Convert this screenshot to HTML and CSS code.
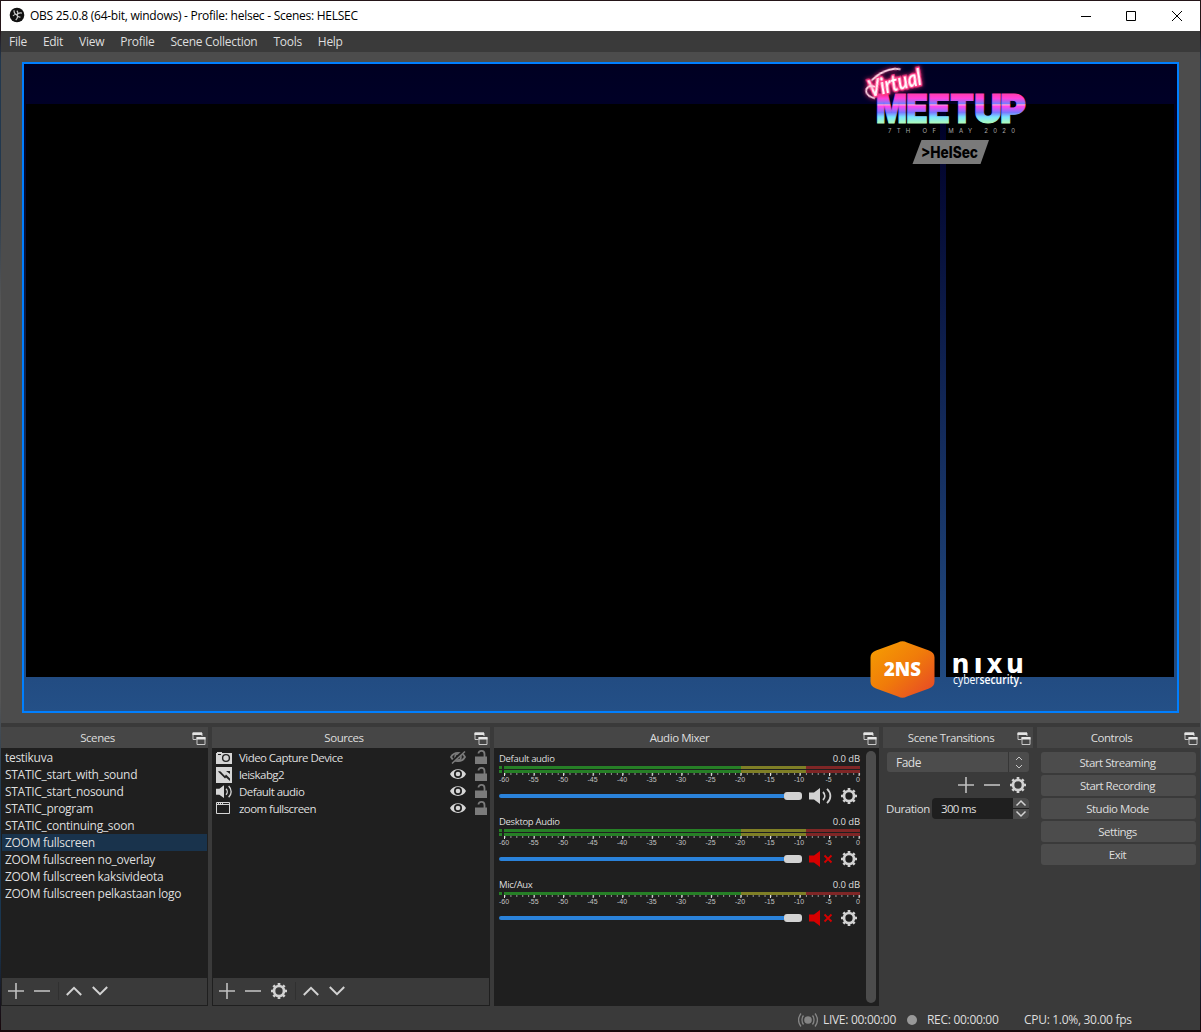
FILE: index.html
```html
<!DOCTYPE html>
<html lang="en">
<head>
<meta charset="utf-8">
<title>OBS 25.0.8</title>
<link rel="stylesheet" href="styles.css">
</head>
<body>
<svg width="0" height="0" class="defs">
  <symbol id="float" viewBox="0 0 14 14"><path d="M1 7.5V1h9v3M1 7.5h3.5" fill="none" stroke="#c8c8c8"/><path d="M.5.5h9.500v2.500H.5z" fill="#e4e4e4"/><path d="M5 5.500h8v7H5z" fill="#464646" stroke="#c8c8c8"/><path d="M4.500 5h9v2.500h-9z" fill="#e8e8e8"/></symbol>
  <symbol id="plus" viewBox="0 0 16 16"><path d="M0 8h16M8 0v16" stroke="#c0c0c0" stroke-width="1.600"/></symbol>
  <symbol id="minus" viewBox="0 0 16 16"><path d="M0 8h16" stroke="#c0c0c0" stroke-width="1.600"/></symbol>
  <symbol id="up" viewBox="0 0 16 16"><path d="M.8 12L8 4.800 15.200 12" fill="none" stroke="#d2d2d2" stroke-width="2"/></symbol>
  <symbol id="down" viewBox="0 0 16 16"><path d="M.8 4L8 11.200 15.200 4" fill="none" stroke="#d2d2d2" stroke-width="2"/></symbol>
  <symbol id="gear" viewBox="0 0 16 16"><circle cx="8" cy="8" r="5" fill="none" stroke="#d2d2d2" stroke-width="2.700"/><g stroke="#d2d2d2" stroke-width="2.700"><path d="M8 0v2.500M8 13.500V16M0 8h2.500M13.500 8H16M2.400 2.400l1.700 1.700M11.900 11.900l1.700 1.700M2.400 13.600l1.700-1.700M11.900 4.100l1.700-1.700"/></g></symbol>
  <symbol id="eye" viewBox="0 0 16 12"><path d="M0 6C3-.5 13-.5 16 6 13 12.500 3 12.500 0 6z" fill="#d6d6d6"/><circle cx="8" cy="6" r="4" fill="#1f1f1f"/><circle cx="8" cy="6" r="2.300" fill="#d6d6d6"/></symbol>
  <symbol id="eye-off" viewBox="0 0 16 14"><path d="M1 7c3-5.500 11-5.500 14 0-3 5.500-11 5.500-14 0z" fill="none" stroke="#7c7c7c" stroke-width="1.800"/><circle cx="8" cy="7" r="3" fill="none" stroke="#7c7c7c" stroke-width="1.500"/><path d="M1 13L14 1" stroke="#1f1f1f" stroke-width="3"/><path d="M2 13.500L15 1.500" stroke="#7c7c7c" stroke-width="1.500"/></symbol>
  <symbol id="lock" viewBox="0 0 12 14"><path d="M0 6.500h12V14H0z" fill="#7b7b7b"/><path d="M3.500 3.500C3.500 0 9.500 0 9.500 4v3" fill="none" stroke="#7b7b7b" stroke-width="1.800"/></symbol>
  <symbol id="sound" viewBox="0 0 24 16"><path d="M0 4.500h5L11 0v16l-6-4.500H0z" fill="#d2d2d2"/><path d="M14 4c2.300 2.300 2.300 5.700 0 8M18 .8c4.500 4.200 4.500 10.200 0 14.400" fill="none" stroke="#d2d2d2" stroke-width="1.800"/></symbol>
  <symbol id="muted" viewBox="0 0 24 16"><path d="M0 4.500h5L11 0v16l-6-4.500H0z" fill="#d60000"/><path d="M15.500 4.500l7 7M22.500 4.500l-7 7" stroke="#d60000" stroke-width="1.800"/></symbol>
  <symbol id="ticks" viewBox="0 0 358 4"><path d="M.500 1h356" stroke="#969696" stroke-width="2" stroke-dasharray="1 4.910"/><path d="M0 1.500h357" stroke="#e4e4e4" stroke-width="3" stroke-dasharray="1 28.550"/></symbol>
</svg>

<div class="window">
  <header class="titlebar">
    <svg class="logo" viewBox="0 0 16 16"><circle cx="8" cy="8" r="7.300" fill="#111"/><g fill="none" stroke="#c8c8c8" stroke-width="1.200"><path d="M5 3.200c0 2.600.8 4 3 4.600M12.900 6.200c-2.400-.6-4 .1-4.900 1.600M6.700 13c2-1.700 2.400-3.200 1.300-5.200"/><path d="M8 7.800c-1.500-.6-3-.2-4 1.200M8 7.800c1.200-1.300 1-3-.2-4M8 7.800c.4 1.600 1.600 2.500 3.500 2.200"/></g></svg>
    <span class="caption">OBS 25.0.8 (64-bit, windows) - Profile: helsec - Scenes: HELSEC</span>
    <svg class="winbtns" viewBox="0 0 110 14"><path d="M1 7.500h10M46.500 2.500h9v9h-9zM92 2l10 10M102 2L92 12" fill="none" stroke="#000"/></svg>
  </header>
  <nav class="menu"><span>File</span><span>Edit</span><span>View</span><span>Profile</span><span>Scene Collection</span><span>Tools</span><span>Help</span></nav>

  <main class="stage">
    <div class="canvas">
      <div class="video wide"></div>
      <div class="video side"></div>
      <svg class="overlay" viewBox="24 64 1153 647">
        <defs>
          <linearGradient id="neon" x1="0" y1="92" x2="0" y2="124" gradientUnits="userSpaceOnUse"><stop offset="0" stop-color="#ff3c9c"/><stop offset=".2" stop-color="#ff40dc"/><stop offset=".36" stop-color="#7a7cff"/><stop offset=".4" stop-color="#ff9cd8"/><stop offset=".45" stop-color="#ff44f0"/><stop offset=".64" stop-color="#7a78ff"/><stop offset=".78" stop-color="#78e4ff"/><stop offset="1" stop-color="#b4ffb0"/></linearGradient>
          <linearGradient id="orange" x1="0" y1="0" x2="1" y2="1"><stop offset="0" stop-color="#f6a000"/><stop offset=".5" stop-color="#f07b0a"/><stop offset="1" stop-color="#e6432a"/></linearGradient>
        </defs>
        <text class="meetup" y="123"><tspan x="876" textLength="31" lengthAdjust="spacingAndGlyphs">M</tspan><tspan x="906" textLength="22" lengthAdjust="spacingAndGlyphs">E</tspan><tspan x="928" textLength="22" lengthAdjust="spacingAndGlyphs">E</tspan><tspan x="950" textLength="24" lengthAdjust="spacingAndGlyphs">T</tspan><tspan x="974" textLength="28" lengthAdjust="spacingAndGlyphs">U</tspan><tspan x="1000" textLength="26" lengthAdjust="spacingAndGlyphs">P</tspan></text>
        <g transform="rotate(-14 895 84)"><text class="virtual" x="868" y="91" textLength="54" lengthAdjust="spacingAndGlyphs">Virtual</text><path class="swash" d="M872 93q-9-5-6-11 4-4 9 0M873 75q17-10 31-4"/></g>
        <text class="date" x="888" y="133" textLength="130">7TH OF MAY 2020</text>
        <path d="M921.500 140H989l-8.500 24h-68z" fill="#7a7a7a"/>
        <text class="helsec" x="921" y="158" textLength="57" lengthAdjust="spacingAndGlyphs">&gt;HelSec</text>
        <path d="M898 642.500q4.500-2.500 9 0l22 8q5.500 2 5.500 7v24q0 5-5.500 7l-22 8q-4.500 2.500-9 0l-22-8q-5.500-2-5.500-7v-24q0-5 5.500-7z" fill="url(#orange)"/>
        <text class="twons" x="884" y="676" textLength="37" lengthAdjust="spacingAndGlyphs">2NS</text>
        <g class="nixu"><text x="951.500" y="672.500" textLength="18" lengthAdjust="spacingAndGlyphs">n</text><text x="973.500" y="672.500">ı</text><text x="986.500" y="672.500" textLength="16" lengthAdjust="spacingAndGlyphs">x</text><text x="1006" y="672.500" textLength="18" lengthAdjust="spacingAndGlyphs">u</text></g>
        <text class="cyber" x="953" y="684" textLength="69" lengthAdjust="spacingAndGlyphs">cyber<tspan>security.</tspan></text>
      </svg>
    </div>
  </main>

  <section class="docks">
    <div class="dock">
      <h2>Scenes<svg><use href="#float"/></svg></h2>
      <div class="list">
        <ul class="scenes"><li>testikuva</li><li>STATIC_start_with_sound</li><li>STATIC_start_nosound</li><li>STATIC_program</li><li>STATIC_continuing_soon</li><li class="sel">ZOOM fullscreen</li><li>ZOOM fullscreen no_overlay</li><li>ZOOM fullscreen kaksivideota</li><li>ZOOM fullscreen pelkastaan logo</li></ul>
        <div class="tools"><svg><use href="#plus"/></svg><svg><use href="#minus"/></svg><i></i><svg><use href="#up"/></svg><svg><use href="#down"/></svg></div>
      </div>
    </div>

    <div class="dock">
      <h2>Sources<svg><use href="#float"/></svg></h2>
      <div class="list">
        <ul class="sources">
          <li><svg class="kind" viewBox="0 0 16 16"><path d="M0 3h1V2h5v1h10v11H0z" fill="#d6d6d6"/><circle cx="10" cy="8" r="3.400" fill="none" stroke="#222" stroke-width="1.400"/><path d="M2 4.500h3" stroke="#222"/></svg><span>Video Capture Device</span><svg class="vis off"><use href="#eye-off"/></svg><svg class="lock"><use href="#lock"/></svg></li>
          <li><svg class="kind" viewBox="0 0 16 16"><path d="M0 0h16v16H0z" fill="#d6d6d6"/><path d="M2 4.500c2-.5 3 0 4 1.500l3 3 1-1.500 4 4v2.500L10 10.500 9 11.500zM10 4h4v3z" fill="#222"/></svg><span>leiskabg2</span><svg class="vis"><use href="#eye"/></svg><svg class="lock"><use href="#lock"/></svg></li>
          <li><svg class="kind" viewBox="0 0 24 24"><path d="M0 7h5l7-5v19l-7-5H0z" fill="#d6d6d6"/><path d="M15 7c2.500 2.500 2.500 6.500 0 9M19 3c5 5 5 12 0 17" fill="none" stroke="#d6d6d6" stroke-width="2"/></svg><span>Default audio</span><svg class="vis"><use href="#eye"/></svg><svg class="lock"><use href="#lock"/></svg></li>
          <li><svg class="kind" viewBox="0 0 16 16"><path d="M.5 1.500h13v11H.5zM0 3.500h14" fill="none" stroke="#d6d6d6"/><path d="M2 2.500h6" stroke="#d6d6d6" stroke-dasharray="1 1"/></svg><span>zoom fullscreen</span><svg class="vis"><use href="#eye"/></svg><svg class="lock"><use href="#lock"/></svg></li>
        </ul>
        <div class="tools"><svg><use href="#plus"/></svg><svg><use href="#minus"/></svg><svg><use href="#gear"/></svg><i></i><svg><use href="#up"/></svg><svg><use href="#down"/></svg></div>
      </div>
    </div>

    <div class="dock">
      <h2>Audio Mixer<svg><use href="#float"/></svg></h2>
      <div class="mixer">
        <div class="channels">
          <div class="channel">
            <div class="names"><span>Default audio</span><span>0.0 dB</span></div>
            <div class="meter"></div><div class="meter"></div>
            <svg class="ticks"><use href="#ticks"/></svg>
            <div class="scale"><b>-60</b><b>-55</b><b>-50</b><b>-45</b><b>-40</b><b>-35</b><b>-30</b><b>-25</b><b>-20</b><b>-15</b><b>-10</b><b>-5</b><b>0</b></div>
            <div class="fader"><div class="track"></div><div class="knob"></div><svg class="spk"><use href="#sound"/></svg><svg class="cog"><use href="#gear"/></svg></div>
          </div>
          <div class="channel">
            <div class="names"><span>Desktop Audio</span><span>0.0 dB</span></div>
            <div class="meter"></div><div class="meter"></div>
            <svg class="ticks"><use href="#ticks"/></svg>
            <div class="scale"><b>-60</b><b>-55</b><b>-50</b><b>-45</b><b>-40</b><b>-35</b><b>-30</b><b>-25</b><b>-20</b><b>-15</b><b>-10</b><b>-5</b><b>0</b></div>
            <div class="fader"><div class="track"></div><div class="knob"></div><svg class="spk"><use href="#muted"/></svg><svg class="cog"><use href="#gear"/></svg></div>
          </div>
          <div class="channel">
            <div class="names"><span>Mic/Aux</span><span>0.0 dB</span></div>
            <div class="meter"></div>
            <svg class="ticks"><use href="#ticks"/></svg>
            <div class="scale"><b>-60</b><b>-55</b><b>-50</b><b>-45</b><b>-40</b><b>-35</b><b>-30</b><b>-25</b><b>-20</b><b>-15</b><b>-10</b><b>-5</b><b>0</b></div>
            <div class="fader"><div class="track"></div><div class="knob"></div><svg class="spk"><use href="#muted"/></svg><svg class="cog"><use href="#gear"/></svg></div>
          </div>
        </div>
        <div class="scrollbar"></div>
      </div>
    </div>

    <div class="dock">
      <h2>Scene Transitions<svg><use href="#float"/></svg></h2>
      <div class="transitions">
        <div class="combo"><span>Fade</span><svg viewBox="0 0 20 20"><path d="M7 8l3-3 3 3M7 13l3 3 3-3" fill="none" stroke="#c8c8c8"/></svg></div>
        <div class="tbtns"><svg><use href="#plus"/></svg><svg><use href="#minus"/></svg><svg><use href="#gear"/></svg></div>
        <div class="duration"><label>Duration</label><div class="spin"><span>300 ms</span><div class="arrows"><svg viewBox="0 0 16 10"><path d="M3.500 7.500L8 3l4.500 4.500" fill="none" stroke="#d2d2d2" stroke-width="1.500"/></svg><svg viewBox="0 0 16 10"><path d="M3.500 2.500L8 7l4.500-4.500" fill="none" stroke="#d2d2d2" stroke-width="1.500"/></svg></div></div></div>
      </div>
    </div>

    <div class="dock">
      <h2>Controls<svg><use href="#float"/></svg></h2>
      <div class="controls"><button>Start Streaming</button><button>Start Recording</button><button>Studio Mode</button><button>Settings</button><button>Exit</button></div>
    </div>
  </section>

  <footer class="status">
    <svg class="live" viewBox="0 0 20 16"><circle cx="10" cy="8" r="3.800" fill="#858585"/><path d="M5.500 3.500c-2 2.500-2 6.500 0 9M14.500 3.500c2 2.500 2 6.500 0 9M3 1.500c-3 4-3 9 0 13M17 1.500c3 4 3 9 0 13" fill="none" stroke="#858585" stroke-width="1.300"/></svg>
    <span class="s-live">LIVE: 00:00:00</span><i class="dot"></i><span class="s-rec">REC: 00:00:00</span><span>CPU: 1.0%, 30.00 fps</span>
  </footer>
</div>
</body>
</html>
```
FILE: styles.css
```css
* { box-sizing: border-box; }
body {
  margin: 0;
  width: 1201px;
  height: 1032px;
  padding: 1px 1px 2px;
  overflow: hidden;
  background: linear-gradient(#241518 0 30px, #22384e 60px 190px, #555 300px 700px, #193650 800px 940px, #180609);
  font: 12px/17px "Open Sans", "Noto Sans", sans-serif;
  letter-spacing: -0.3px;
  color: #dedede;
}
svg { display: block; flex: none; }
.defs { position: absolute; }
.window { width: 1199px; height: 1029px; background: #3a3a3a; display: flex; flex-direction: column; }
.titlebar { height: 30px; flex: none; background: #fff; color: #000; display: flex; align-items: center; padding: 0 10px 2px 8px; }
.logo { width: 16px; height: 16px; }
.caption { margin-left: 5px; letter-spacing: -0.26px; white-space: nowrap; }
.winbtns { width: 110px; height: 14px; margin: 1px 0 0 auto; }
.menu { height: 21px; flex: none; display: flex; align-items: center; gap: 16px; padding: 0 0 0 8px; background: #3a3a3a; letter-spacing: -0.28px; }
.stage { height: 671px; flex: none; background: #4c4c4c; padding: 10px 21px; }
.canvas {
  position: relative; width: 1157px; height: 651px; border: 2px solid #007fff;
  background: linear-gradient(#000022, #000028 8%, #245087 100%);
  display: flex; gap: 6px; padding: 40px 2px 34px;
}
.video { background: #000; height: 573px; }
.wide { width: 914px; }
.side { width: 228px; }
.overlay { position: absolute; left: 0; top: 0; width: 1153px; height: 647px; letter-spacing: 0; }
.meetup { font: 900 40px "Inter", sans-serif; fill: url(#neon); stroke: url(#neon); stroke-width: 1px; }
.virtual { font: italic 700 23px "Lato", sans-serif; fill: #fff; stroke: #ff3c86; stroke-width: 3px; paint-order: stroke; filter: drop-shadow(0 0 2px #e9246c); }
.swash { fill: none; stroke: #ffd5e5; stroke-width: 1.8px; filter: drop-shadow(0 0 2px #ff2070); }
.date { font: 6px "Inter", sans-serif; fill: #a8a8a8; letter-spacing: 3px; }
.helsec { font: 800 16px "Inter", sans-serif; fill: #000; }
.twons { font: 800 20px "Open Sans", sans-serif; fill: #fff; }
.nixu { font: 700 27px "DejaVu Sans", sans-serif; fill: #fff; }
.cyber { font: 12px "Open Sans", sans-serif; fill: #fff; }
.cyber tspan { font-weight: 600; }

.docks { display: grid; grid-template-columns: 207px 278px 385px 150px 163px; gap: 4px; height: 279px; margin-top: 4px; flex: none; }
.dock { display: flex; flex-direction: column; min-width: 0; }
h2 { position: relative; margin: 0; height: 21px; flex: none; background: #464646; font-size: 11.5px; font-weight: 400; line-height: 22px; text-align: center; padding-right: 14px; letter-spacing: -0.45px; }
h2 svg { position: absolute; right: 2px; top: 5px; width: 14px; height: 14px; }
.list { flex: 1; display: flex; flex-direction: column; background: #1f1f1f; padding: 1px; }
ul { list-style: none; margin: 0; padding: 0; flex: 1; }
.scenes li { height: 17px; line-height: 18px; padding-left: 3px; white-space: nowrap; letter-spacing: -0.29px; }
.sel { background: #19334c; }
.sources li { height: 17px; display: flex; align-items: center; padding: 0 2px 0 3px; }
.kind { width: 16px; height: 16px; margin-right: 7px; }
.sources span { flex: 1; white-space: nowrap; line-height: 18px; font-size: 11.5px; letter-spacing: -0.55px; }
.vis { width: 16px; height: 12px; margin: -1px 9px 0 0; }
.off { height: 14px; }
.lock { width: 12px; height: 14px; margin-top: -1px; }
.tools { height: 27px; background: #3a3a3a; display: flex; align-items: center; gap: 10px; padding: 0 0 2px 6px; }
.tools svg, .tbtns svg { width: 16px; height: 16px; }
.tools i { width: 1px; height: 18px; background: #303030; margin: 0 -2.5px; }
.mixer { flex: 1; background: #1f1f1f; display: flex; justify-content: space-between; padding: 3px 3px 3px 5px; }
.channels { width: 361px; }
.channel { height: 63px; display: flex; flex-direction: column; }
.names { height: 15px; display: flex; justify-content: space-between; font-size: 9.5px; line-height: 15px; letter-spacing: -0.33px; }
.names span + span { letter-spacing: -0.1px; }
.meter { height: 3px; margin-bottom: 1px; width: 361px; flex: none; background: linear-gradient(90deg, #267f26 0 3px, #1f1f1f 3px 5px, #267f26 5px 242px, #7f7f26 242px 307px, #7f2626 307px); }
.meter + .ticks { margin-top: -1px; }
.ticks { width: 358px; height: 4px; margin-left: 5px; flex: none; }
.scale { display: flex; width: 384px; margin: -1px 0 0 -9.7px; height: 8px; flex: none; }
.scale b { width: 29.5px; flex: none; text-align: center; font: 7px/8px "Liberation Sans", sans-serif; letter-spacing: 0; color: #c4c4c4; }
.fader { display: flex; align-items: center; height: 16px; margin-top: 4px; }
.track { height: 4px; width: 285px; border-radius: 2px 0 0 2px; background: #2a82da; }
.knob { width: 18px; height: 8px; border-radius: 3px; background: #d2d2d2; }
.spk { width: 24px; height: 16px; margin-left: 7px; }
.cog { width: 16px; height: 16px; margin-left: 8px; }
.scrollbar { width: 10px; border-radius: 5px; background: #4c4c4c; }
.transitions { padding: 4px 4px 0 3px; }
.combo { height: 20px; margin-left: 1px; display: flex; justify-content: space-between; background: #4c4c4c; border-radius: 3px; line-height: 22px; padding-left: 9px; letter-spacing: -0.5px; }
.combo svg { width: 21px; height: 20px; border-left: 1px solid #363636; }
.tbtns { display: flex; justify-content: flex-end; gap: 10px; padding: 5px 3px 0 0; height: 25px; }
.duration { display: flex; align-items: center; justify-content: space-between; height: 21px; margin-top: 1px; font-size: 11.5px; letter-spacing: -0.65px; }
.duration label { letter-spacing: -0.45px; }
.spin { width: 97px; height: 21px; background: #1f1f1f; border-radius: 4px; display: flex; justify-content: space-between; padding-left: 9px; line-height: 22px; overflow: hidden; }
.arrows { width: 16px; display: grid; gap: 1px; }
.arrows svg { width: 16px; height: 10px; background: #4c4c4c; }
.controls { display: grid; gap: 2px; padding: 4px 4px 0; }
button { height: 21px; border: 0; border-radius: 3px; padding: 0 2px 0 0; background: #4c4c4c; color: inherit; font: inherit; font-size: 11.5px; letter-spacing: -0.5px; }
.status { flex: 1; display: flex; align-items: center; padding: 3px 0 0 797px; white-space: nowrap; }
.live { width: 20px; height: 16px; margin-right: 5px; }
.s-live { width: 84px; }
.dot { width: 10px; height: 10px; border-radius: 50%; background: #999; margin-right: 10px; }
.s-rec { width: 97px; }
```
